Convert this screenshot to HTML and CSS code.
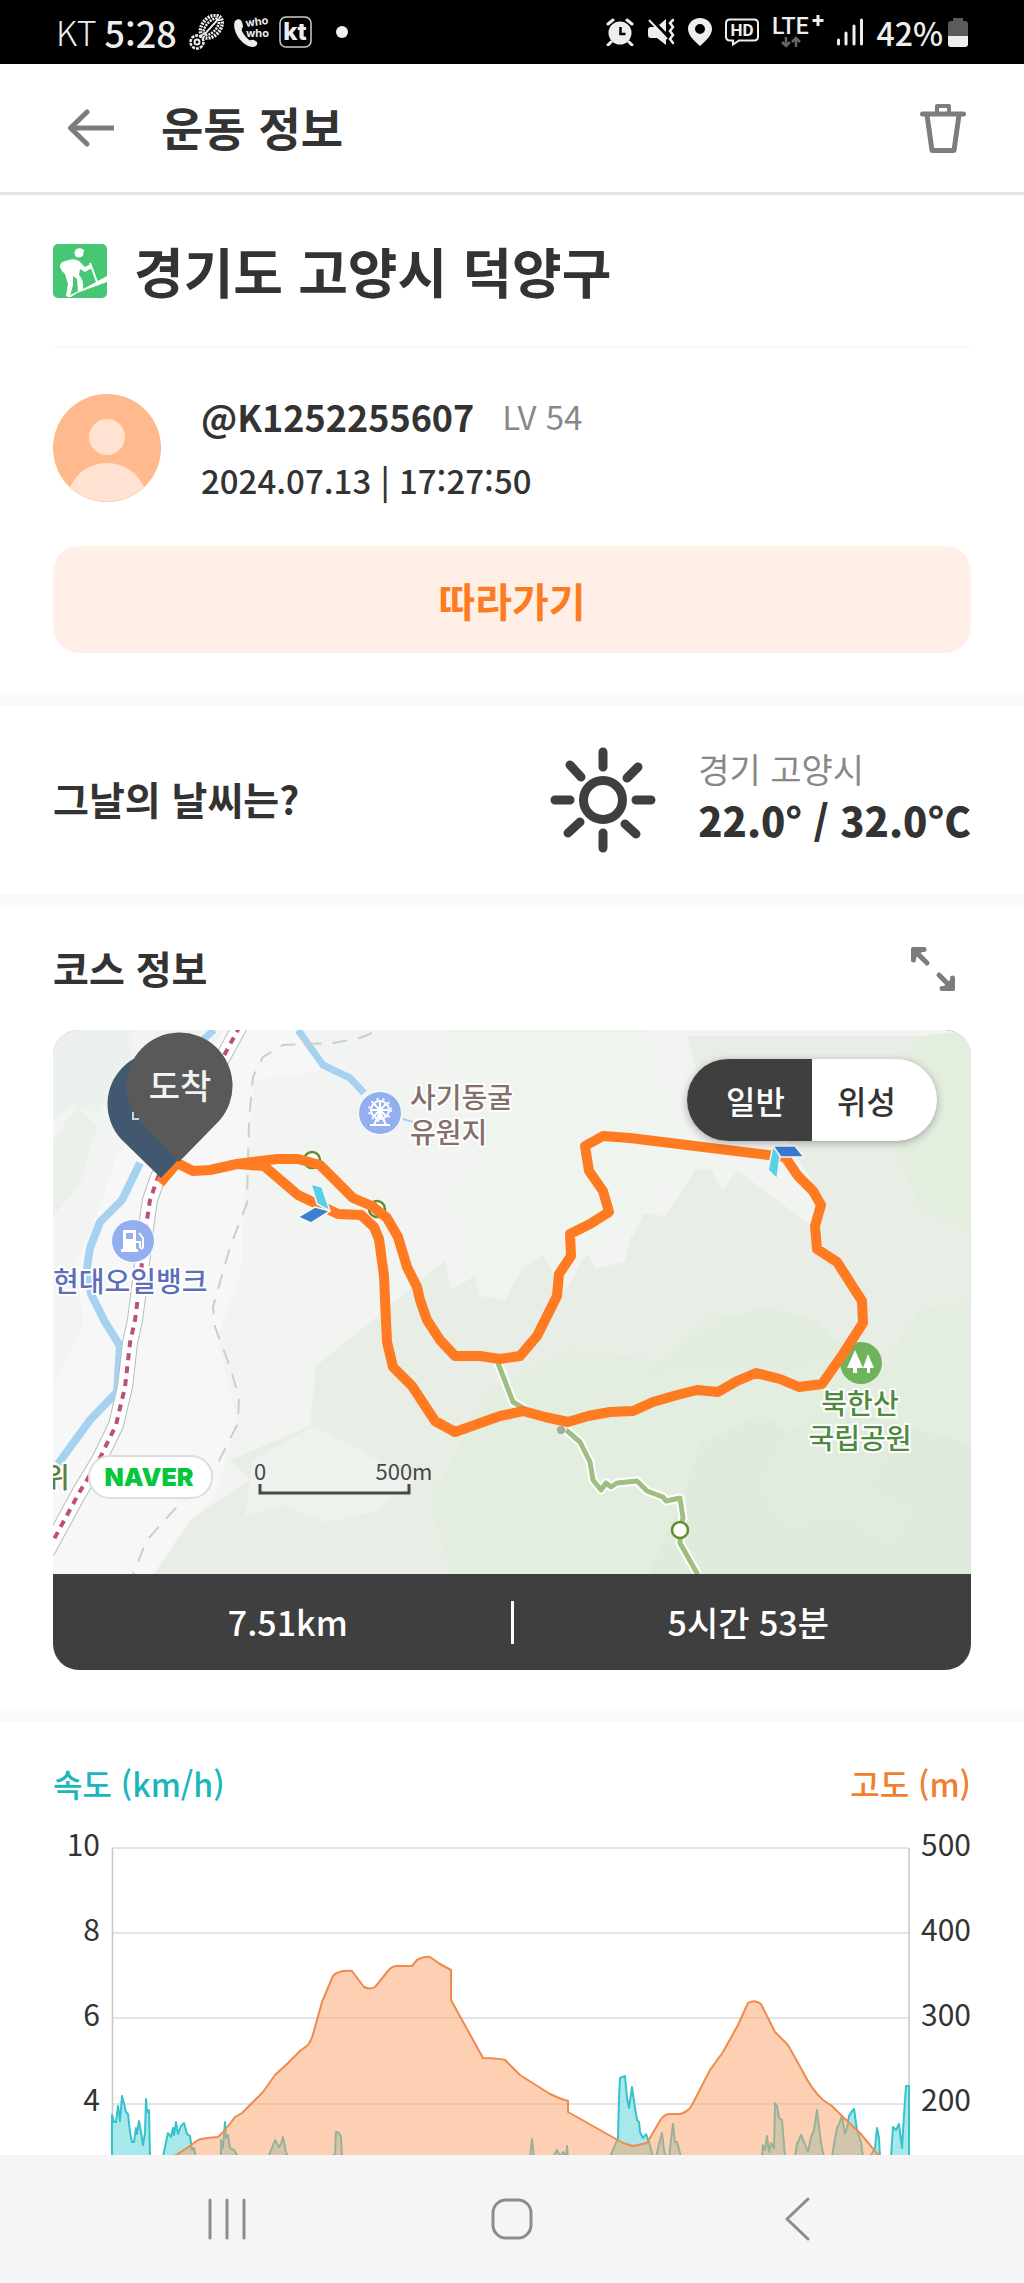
FILE: index.html
```html
<!DOCTYPE html>
<html lang="ko">
<head>
<meta charset="utf-8">
<meta name="viewport" content="width=device-width, initial-scale=1">
<title>운동 정보</title>
<link rel="stylesheet" href="styles.css">
</head>
<body>
<div class="app">
  <div class="status">
    <div class="status-group">
      <span class="carrier">KT</span>
      <span class="clock">5:28</span>
      <svg class="ic-leaf" width="36" height="36" viewBox="0 0 36 36" fill="none" stroke="#eee">
        <g transform="rotate(42 23 12)">
          <ellipse cx="23" cy="13" rx="9" ry="13" stroke-width="3.5" stroke-dasharray="2 1"/>
          <ellipse cx="23" cy="13" rx="5" ry="10" stroke-width="2.5" stroke-dasharray="2 1"/>
          <path d="M23 2v22" stroke-width="2"/>
        </g>
        <circle cx="8" cy="28" r="6.5" stroke-width="2.5" stroke-dasharray="3 1"/>
        <circle cx="8" cy="28" r="2.5" stroke-width="2"/>
      </svg>
      <svg class="ic-who" width="38" height="36" viewBox="0 0 38 36">
        <path d="M2 7c3-3 6-2 7 1l1 4c0 2-2 3-1 5 2 4 4 6 7 9 2 1 3-1 5 0l3 2c1 2-1 5-4 5C9 33-2 16 2 7z" fill="#eee"/>
        <text x="13" y="13" class="who" transform="rotate(-8 13 13)">who</text>
        <text x="13" y="23" class="who">who</text>
      </svg>
      <svg width="33" height="32" viewBox="0 0 33 32">
        <rect x="1" y="1" width="31" height="30" rx="6" fill="none" stroke="#ccc" stroke-width="1.5"/>
        <text x="16" y="24" class="kt">kt</text>
      </svg>
      <svg class="ic-dot" width="12" height="12" viewBox="0 0 12 12"><circle cx="6" cy="6" r="6" fill="#f2f2f2"/></svg>
    </div>
    <div class="status-group status-right">
      <svg width="28" height="28" viewBox="0 0 28 28">
        <circle cx="14" cy="15" r="11.5" fill="#eee"/>
        <path d="M2 6l5-4M26 6l-5-4M5 24l-3 3M23 24l3 3" stroke="#eee" stroke-width="3" stroke-linecap="round"/>
        <path d="M14.500 9v7h5" fill="none" stroke="#000" stroke-width="2.500"/>
      </svg>
      <svg width="28" height="28" viewBox="0 0 28 28">
        <path d="M1 12q0-3 3-3h5l10 12v6l-9-7H4q-3 0-3-3zM12 7l7-6v13z" fill="#eee"/>
        <path d="M2 2l18 19" stroke="#eee" stroke-width="2"/>
        <path d="M26 2l-3 3 3 4-3 4 3 4-3 4 3 4" fill="none" stroke="#eee" stroke-width="2.500" stroke-linecap="round"/>
      </svg>
      <svg width="24" height="28" viewBox="0 0 24 28"><path fill-rule="evenodd" d="M12 0C5 0 0 5 0 11c0 7 8 13 12 17 4-4 12-10 12-17C24 5 19 0 12 0zm0 6a5 5 0 1 1 0 10 5 5 0 0 1 0-10z" fill="#eee"/></svg>
      <svg width="34" height="28" viewBox="0 0 34 28">
        <path d="M5 1.500h24q4 0 4 4v13q0 4-4 4H14l-6 4v-4H5q-4 0-4-4v-13q0-4 4-4z" fill="none" stroke="#eee" stroke-width="2"/>
        <text x="17" y="18" class="hd">HD</text>
      </svg>
      <svg width="52" height="36" viewBox="0 0 52 36">
        <text x="0" y="20" class="lte">LTE</text>
        <path d="M46 1v11M40.500 6.500h11" stroke="#eee" stroke-width="3"/>
        <path d="M14 23v9m-4-4l4 4 4-4M24 33v-9m-4 4l4-4 4 4" fill="none" stroke="#666" stroke-width="2.500"/>
      </svg>
      <svg width="26" height="28" viewBox="0 0 26 28"><path d="M1.500 22v4M9 15v11M17 8v18M24.500 2v24" stroke="#eee" stroke-width="3" stroke-linecap="round"/></svg>
      <span class="percent">42%</span>
      <svg class="ic-battery" width="20" height="29" viewBox="0 0 20 29">
        <path d="M5 0h10v3h2q3 0 3 3v12H0V6q0-3 3-3h2z" fill="#5b5b5b"/>
        <path d="M0 18h20v8q0 3-3 3H3q-3 0-3-3z" fill="#eee"/>
      </svg>
    </div>
  </div>

  <header class="topbar">
    <button class="icon-button" type="button" aria-label="뒤로">
      <svg width="48" height="40" viewBox="0 0 48 40" fill="none" stroke="#7d7d7d" stroke-width="5"><path d="M47 20H4"/><path d="M20 4L3.500 20 20 36" stroke-linecap="round" stroke-linejoin="round"/></svg>
    </button>
    <h1 class="page-title">운동 정보</h1>
    <button class="icon-button" type="button" aria-label="삭제">
      <svg width="46" height="50" viewBox="0 0 46 50" fill="none" stroke="#7d7d7d" stroke-width="5" stroke-linejoin="round">
        <path d="M2.500 11h41" stroke-linecap="round"/><path d="M17 10V3h12v7" stroke-width="4"/><path d="M7 12l5 35.500h22L39 12"/>
      </svg>
    </button>
  </header>

  <main class="content">
    <section class="section profile">
      <div class="place">
        <svg width="54" height="54" viewBox="0 0 54 54">
          <rect width="54" height="54" rx="5" fill="#47c774"/>
          <path d="M13 53L32 44 54 32v6L24 49 18 53z" fill="#fff"/>
          <circle cx="26" cy="9" r="4.500" fill="#fff"/><path d="M22 7q4-5 9-1v2z" fill="#fff"/>
          <path d="M16 16q5-2 10 1l6 6 6-3 1 4-7 4-5-3-1 6q5 5 4 14l-5 3-1-13-4-3v9l-3 11h-4l2-12-3-10q-8-7-3-12z" fill="#fff"/>
          <path d="M37 19l7 19" stroke="#fff" stroke-width="2"/>
        </svg>
        <h2 class="place-name">경기도 고양시 덕양구</h2>
      </div>
      <div class="user">
        <svg width="108" height="108" viewBox="0 0 108 108">
          <circle cx="54" cy="54" r="54" fill="#ffb98c"/>
          <circle cx="54" cy="43" r="18" fill="#ffe2d1"/>
          <path d="M17 93C24 78 37 69 54 69s30 9 37 24a54 54 0 0 1-74 0z" fill="#ffe2d1"/>
        </svg>
        <div class="user-text">
          <p class="user-name"><a class="handle" href="#">@K1252255607</a><span class="level">LV 54</span></p>
          <p class="user-date">2024.07.13 | 17:27:50</p>
        </div>
      </div>
      <button class="follow" type="button">따라가기</button>
    </section>

    <section class="section weather">
      <h3 class="heading">그날의 날씨는?</h3>
      <div class="forecast">
        <svg width="106" height="106" viewBox="-53 -53 106 106" fill="none" stroke="#3f3f3f" stroke-width="9" stroke-linecap="round">
          <circle r="19.500"/>
          <path d="M0-48v15M0 33v15M-48 0h15M33 0h15M-33-35l11 12M35-33L24-22M-35 33l12-11M33 34L22 24"/>
        </svg>
        <div class="reading">
          <p class="region">경기 고양시</p>
          <p class="temp">22.0° / 32.0°C</p>
        </div>
      </div>
    </section>

    <section class="section course">
      <div class="course-head">
        <h3 class="heading">코스 정보</h3>
        <button class="icon-button" type="button" aria-label="지도 확대">
          <svg width="44" height="44" viewBox="0 0 44 44" fill="none" stroke="#7d7d7d" stroke-width="5" stroke-linecap="round" stroke-linejoin="round"><path d="M2.500 13V2.500H13M4 4l12 12M41.500 31v10.500H31M40 40L28 28"/><path d="M2.500 10V2.500H10zM41.500 34v7.500H34z"/></svg>
        </button>
      </div>
      <div class="card">
        <div class="map">
          <svg class="map-canvas" viewBox="53 1030 918 544" role="img" aria-label="코스 지도">
            <rect x="53" y="1030" width="918" height="544" fill="#f1f4f1"/>
            <path d="M53 1030h78v52l-20 8-12 24-26-8-20 14z" fill="#edf1ed"/>
            <path d="M225 1030h70l30 40 -70 10-10 90-4 100-24 70 20 80-20 70-60 84H53v-190l30-60-6-60 20-50 20-60 55-50z" fill="#f6f7f6"/>
            <path d="M53 1140l24-34 20 20-18 60-26 30z" fill="#ebf0ea"/>
            <path d="M385 1310l60-50 6 30 34-20 32 10 20-40 26 24 20-20 12 24 30-6 10-50 30 4 14-20 24-40 20 34 14-20 40 30 40 30-6-50-50-80-60-16-14-48h300v544H150l40-60 60-40-20-20 80-34 6-60z" fill="#e8eee6"/>
            <path d="M445 1030h208l6 60 32 60 50 24-50-6-34 18-24 50-20-6-30 30-20 34-20-40-22 16-16 30-26-4-22-100 34-60z" fill="#f0f4ef"/>
            <path d="M253 1460l60-34 46 24 56 30-40 32-50 10-40-16-40 10z" fill="#eef2ed"/>
            <path d="M430 1500l60-110 80-40 90 10 40-40 60-10 60 20 60 40 40-60 51-10v274H452z" fill="#e3ede0"/>
            <path d="M650 1574l30-70 20-60 60-30 60 40 40-40 111 30v130z" fill="#dfebdc"/>
            <path d="M760 1480l30-50 50-20 60 20-30 60 40 20-16 36-50-30-60 10z" fill="#e1ecdf"/>
            <path d="M871 1106l50-70 50-6v200l-50-20-20-50z" fill="#e3eedf"/>
            <path d="M704 1330l60-24 50 14 30 30-50 20-90-4-64 10z" fill="#e2ecdf"/>

            <g fill="none" stroke="#a6d2f2" stroke-linejoin="round">
              <path d="M214 1030l-40 36M298 1030l25 35 27 13 14 15" stroke-width="7"/>
              <path d="M140 1163l-18 37-22 22-10 26-3 20 4 26 14 28 15 24-3 46-27 28-32 44" stroke-width="8"/>
              <path d="M403 1119l10 3" stroke-width="2"/>
            </g>
            <g fill="none" stroke="#c9d0cb" stroke-width="2" stroke-dasharray="15 11">
              <path d="M372 1033l-12 5-27 5-50 2-20 12-10 20-4 43-2 83-17 44-17 60 2 20 15 40 9 30-1 26-21 42-34 35-36 40-14 34"/>
            </g>
            <g fill="none" stroke-linejoin="round">
              <path d="M240 1026l-82 151-8 23-3 20-9 77-3 23-5 23-5 44-9 38-17 35-20 33-32 59" stroke="#b9bcbb" stroke-width="16"/>
              <path d="M240 1026l-82 151-8 23-3 20-9 77-3 23-5 23-5 44-9 38-17 35-20 33-32 59" stroke="#fff" stroke-width="14"/>
              <path d="M240 1026l-82 151-8 23-3 20-9 77-3 23-5 23-5 44-9 38-17 35-20 33-32 59" stroke="#bd4f7b" stroke-width="4" stroke-dasharray="7 6"/>
              <path d="M498 1363l15 39 12 7M566 1430l14 12 10 20 3 18 8 10 5-7 5 4 6-4 20-2 10 10 16 6 3 4 14-3 3 20-3 12v13l18 32" stroke="#fff" stroke-width="9"/>
              <path d="M498 1363l15 39 12 7M566 1430l14 12 10 20 3 18 8 10 5-7 5 4 6-4 20-2 10 10 16 6 3 4 14-3 3 20-3 12v13l18 32" stroke="#9dc082" stroke-width="5"/>
            </g>
            <circle cx="561" cy="1430" r="4" fill="#9dac9b"/>
            <g fill="#fff" stroke="#5f8f2f" stroke-width="2.500"><circle cx="680" cy="1530" r="8"/><circle cx="312" cy="1160" r="8"/><circle cx="377" cy="1209" r="8"/></g>

            <circle cx="861" cy="1363" r="21" fill="#6fb45c"/>
            <path d="M855 1350l8 18h-6v5h-4v-5h-6zM868 1354l6 14h-4v5h-3v-5h-4z" fill="#fff"/>

            <path d="M160 1183l17-20 16 8 17-1 27-6 40-5h21l22 6 33 33 19 8 15 12 11 19 9 30 10 20 3 13 7 20 13 20 15 16h25l20 3 20-3 17-20 20-40 2-22 12-18-1-22 20-10 19-12-6-21-14-20-4-25 18-10 27 2 155 19 13 19 15 15 8 14-6 21 2 23 20 13 25 39 1 22-20 31-21 30-23 3-19-8-24-6-19 8-19 11-21-2-20 5-24 7-20 9-23 1-22 4-20 6-23-5-22-6-23 5-45 16-20-11-23-35-19-19-6-25-2-43-1-23-5-37-5-12-13-12-23-1-40-19-34-29-27-2" fill="none" stroke="#ff7a21" stroke-width="10" stroke-linejoin="round"/>
            <g stroke="#f4f7f4" stroke-width="1.500" stroke-linejoin="round">
              <path d="M298 1217l17-10 15 4-19 12z" fill="#3b7fd0"/><path d="M311 1184l11 3 8 24-13-7z" fill="#58d0e6"/>
              <path d="M773 1146h22l9 11h-24z" fill="#3b78d0"/><path d="M773 1146l7 10-3 23-9-9z" fill="#58d0e6"/>
            </g>

            <path d="M161 1178l-40-39a52 52 0 1 1 77 0z" fill="#425870"/>
            <path d="M179 1162l-37-39a53 53 0 1 1 77-2z" fill="#595959"/>
            <path d="M133 1112v7h6" fill="none" stroke="#ccd3da" stroke-width="2"/>
            <text x="180" y="1099" class="pin-label">도착</text>

            <g fill="#93aff0" stroke="#fff" stroke-width="1"><circle cx="380" cy="1113" r="21.500"/><circle cx="133" cy="1241" r="21.500"/></g>
            <g fill="none" stroke="#fff" stroke-width="2">
              <circle cx="380" cy="1110" r="9"/><path d="M371 1110h18M380 1101v18M374 1104l12 12M386 1104l-12 12M380 1112l-6 13M380 1112l6 13M370 1125h20"/>
              <circle cx="380" cy="1110" r="11" stroke-dasharray="2 4"/>
            </g>
            <path fill-rule="evenodd" d="M123 1230h13v19h2v3h-17v-3h2zm3 3v6h7v-6z" fill="#fff"/>
            <path d="M139 1233l4 5v9q-1 3-3 0v-5h-4" fill="none" stroke="#fff" stroke-width="2"/>

            <g class="poi">
              <text x="410" y="1108" class="poi-brown">사기동굴</text>
              <text x="410" y="1143" class="poi-brown">유원지</text>
              <text x="53" y="1292" class="poi-blue">현대오일뱅크</text>
              <text x="860" y="1414" class="poi-green">북한산</text>
              <text x="860" y="1449" class="poi-green">국립공원</text>
              <text x="44" y="1488" class="poi-olive">위</text>
            </g>
            <rect x="89" y="1456" width="123" height="42" rx="21" fill="#fff" stroke="#dcdedc" stroke-width="2"/>
            <text x="149" y="1486" class="naver">NAVER</text>
            <path d="M260 1484v9h149v-9" fill="none" stroke="#484848" stroke-width="3"/>
            <text x="260" y="1480" class="scale">0</text>
            <text x="404" y="1480" class="scale">500m</text>
          </svg>
          <div class="toggle">
            <button class="toggle-item is-on" type="button" aria-pressed="true">일반</button>
            <button class="toggle-item" type="button" aria-pressed="false">위성</button>
          </div>
        </div>
        <div class="summary">
          <span class="summary-item">7.51km</span>
          <span class="summary-line"></span>
          <span class="summary-item">5시간 53분</span>
        </div>
      </div>
    </section>

    <section class="stats">
      <div class="legend"><span class="speed">속도 (km/h)</span><span class="altitude">고도 (m)</span></div>
      <svg class="chart" viewBox="53 1820 918 335" role="img" aria-label="속도와 고도 그래프">
        <path d="M112 1848h797M112 1933h797M112 2018h797M112 2104h797" stroke="#e4e4e4" stroke-width="2"/>
        <path d="M112.500 1848v310M909 1848v310" stroke="#c8c8c8" stroke-width="1.500"/>
        <path d="M112 2157V2115L114 2122 116 2122 118 2106 120 2121 122 2096 124 2104 126 2112 128 2114 130 2132 132 2142 134 2142 136 2128 137 2134 139 2121 141 2132 143 2145 145 2133 146 2099 147 2112 149 2110 150 2157ZM163 2157L166 2142 168 2133 171 2137 173 2128 174 2135 176 2122 178 2134 181 2126 184 2123 187 2134 190 2136 192 2150 194 2148 196 2157ZM221 2157L221 2140 223 2148 225 2122 226 2138 228 2135 230 2148 234 2150 238 2157ZM268 2157L272 2148 275 2140 279 2147 281 2144 283 2137 286 2152 288 2157ZM331 2157L335 2154 336 2132 339 2133 341 2137 342 2157ZM530 2157L532 2139 534 2157ZM553 2157L557 2150 560 2156 563 2152 566 2156 567 2146 568 2157ZM610 2157L618 2138 619 2098 620 2078 625 2076 627 2098 629 2108 632 2087 635 2108 637 2120 639 2122 640 2132 643 2138 646 2134 649 2142 653 2157ZM656 2157L659 2144 662 2133 664 2150 666 2157ZM669 2157L671 2140 673 2124 675 2142 677 2142 681 2157ZM762 2157L763 2145 765 2150 767 2136 769 2152 771 2143 774 2148 775 2103 777 2106 779 2118 782 2120 785 2157ZM795 2157L797 2144 801 2135 804 2142 808 2152 811 2137 814 2130 817 2110 821 2143 824 2157ZM832 2157L834 2144 837 2128 839 2124 842 2116 845 2134 847 2128 849 2116 852 2111 854 2109 857 2130 861 2142 863 2157ZM870 2157L875 2148 877 2128 879 2138 880 2157ZM891 2157L893 2127 896 2130 899 2124 902 2148 904 2115 906 2086 909 2086 909 2157Z" fill="#a8e8ea" stroke="#35c3cb" stroke-width="2" stroke-linejoin="round"/>
        <path d="M173 2157L187 2148 198 2140Q204 2138 218 2137 224 2132 235 2117L242 2113 263 2092 275 2075 288 2063 300 2051 308 2045Q312 2040 315 2027L322 2002 333 1976Q338 1970 352 1971L364 1987Q370 1990 375 1987L388 1971Q392 1966 397 1966H412L417 1960Q425 1956 430 1957L440 1964 451 1970V2000L483 2058Q496 2058 505 2060L520 2075 550 2094Q558 2098 568 2101V2112L623 2143 633 2146 647 2143 661 2119Q665 2114 670 2114H680Q688 2112 692 2105L710 2070 723 2052 738 2025 748 2003Q755 1999 761 2004L775 2032 788 2045 803 2072Q812 2090 823 2100L832 2106 843 2117 860 2133 880 2157Z" fill="#fca26a" fill-opacity=".5" stroke="#ee8b4d" stroke-width="2" stroke-linejoin="round"/>
        <g class="axis"><text x="100" y="1856">10</text><text x="100" y="1941">8</text><text x="100" y="2026">6</text><text x="100" y="2111">4</text></g>
        <g class="axis"><text x="971" y="1856">500</text><text x="971" y="1941">400</text><text x="971" y="2026">300</text><text x="971" y="2111">200</text></g>
      </svg>
    </section>
  </main>

  <nav class="navbar">
    <button class="nav-button" type="button" aria-label="최근 앱"><svg width="40" height="44" viewBox="0 0 40 44" stroke="#8c8c8e" stroke-width="3" stroke-linecap="round"><path d="M3 3v38M20 3v38M37 3v38"/></svg></button>
    <button class="nav-button" type="button" aria-label="홈"><svg width="42" height="42" viewBox="0 0 42 42" fill="none" stroke="#8c8c8e" stroke-width="3"><rect x="2" y="2" width="38" height="38" rx="13"/></svg></button>
    <button class="nav-button" type="button" aria-label="뒤로 가기"><svg width="26" height="44" viewBox="0 0 26 44" fill="none" stroke="#8c8c8e" stroke-width="3" stroke-linecap="round" stroke-linejoin="round"><path d="M24 2L3 22l21 20"/></svg></button>
  </nav>
</div>
</body>
</html>
```

FILE: styles.css
```css
* { box-sizing: border-box; }

body {
  margin: 0;
  background: #fff;
  color: #333;
  font-family: "Noto Sans CJK KR", sans-serif;
}

h1, h2, h3, p { margin: 0; }

svg { display: block; flex: none; }

button {
  margin: 0;
  padding: 0;
  border: 0;
  background: none;
  color: inherit;
  font: inherit;
  cursor: pointer;
}

.app {
  display: flex;
  flex-direction: column;
  height: 100vh;
}

/* Status bar */
.status {
  display: flex;
  flex: none;
  align-items: center;
  justify-content: space-between;
  height: 64px;
  padding: 0 56px;
  background: #000;
  color: #eee;
  font-size: 34px;
  line-height: 48px;
}
.status-group { display: flex; align-items: center; gap: 8px; }
.carrier { font-weight: 300; }
.clock, .percent { font-weight: 500; }
.clock { margin-right: 4px; font-size: 36px; }
.percent { font-size: 32px; }
.ic-dot { margin-left: 16px; }
.status-right { gap: 13px; }
.ic-battery { margin-left: -8px; }
.who { font: 700 11px Inter, sans-serif; fill: #eee; }
.kt { font: 800 24px Inter, sans-serif; fill: #eee; text-anchor: middle; }
.hd { font: 700 17px Roboto, sans-serif; fill: #eee; text-anchor: middle; }
.lte { font: 500 23px Roboto, sans-serif; fill: #eee; }

/* Title bar */
.topbar {
  display: flex;
  flex: none;
  align-items: center;
  height: 131px;
  padding: 0 58px 0 67px;
  border-bottom: 3px solid #e4e4e4;
}
.page-title {
  flex: 1;
  padding: 0 0 4px 46px;
  font-size: 46px;
  font-weight: 700;
  line-height: 60px;
}

.content { flex: 1; min-height: 0; overflow: hidden; }
.section { border-bottom: 13px solid #fafafa; }
.heading { padding-bottom: 4px; font-size: 39px; font-weight: 700; line-height: 56px; }

/* Place and user */
.profile { padding: 49px 53px 40px; }
.place {
  display: flex;
  align-items: center;
  gap: 27px;
  padding-bottom: 48px;
  border-bottom: 2px solid #f8f8f8;
}
.place-name { font-size: 54px; font-weight: 700; line-height: 54px; }
.user { display: flex; align-items: center; gap: 40px; padding: 46px 0 44px; }
.user-text {
  display: grid;
  gap: 20px;
  font-size: 33px;
  font-weight: 500;
  line-height: 44px;
}
.user-name { display: flex; align-items: center; gap: 28px; }
.handle { color: inherit; font-size: 36px; font-weight: 700; text-decoration: none; }
.level { color: #888; font-weight: 400; }
.follow {
  display: block;
  width: 100%;
  height: 107px;
  border-radius: 26px;
  background: #ffefe6;
  color: #fc7c22;
  font-size: 40px;
  font-weight: 700;
}

/* Weather */
.weather {
  display: flex;
  align-items: center;
  justify-content: space-between;
  padding: 40px 53px;
}
.forecast { display: flex; align-items: center; gap: 42px; }
.reading { padding-bottom: 6px; }
.region { color: #888; font-size: 34px; line-height: 46px; }
.temp { font-size: 40px; font-weight: 900; line-height: 56px; }

/* Course */
.course { padding: 0 53px 39px; }
.course-head {
  display: flex;
  align-items: center;
  justify-content: space-between;
  height: 123px;
  padding-right: 16px;
}
.card { overflow: hidden; border-radius: 26px; background: #3f3f3f; }
.map { position: relative; }
.map-canvas { width: 100%; height: auto; }
.pin-label { font-size: 34px; font-weight: 500; fill: #f2f2f2; text-anchor: middle; }
.poi { font-size: 28px; font-weight: 500; stroke: #fff; stroke-width: 4px; paint-order: stroke; stroke-linejoin: round; }
.poi-brown { fill: #84706a; }
.poi-blue { fill: #5c6fb8; }
.poi-green { fill: #4e8a3e; text-anchor: middle; }
.poi-olive { fill: #5c8040; }
.naver { font: 900 25px Inter, sans-serif; fill: #04c73c; text-anchor: middle; }
.scale { font-size: 22px; fill: #484848; text-anchor: middle; }
.toggle {
  position: absolute;
  top: 29px;
  right: 34px;
  display: flex;
  overflow: hidden;
  border-radius: 41px;
  background: #fff;
  box-shadow: 0 2px 8px rgba(0, 0, 0, .3);
}
.toggle-item {
  width: 125px;
  height: 82px;
  padding-right: 16px;
  font-size: 32px;
  font-weight: 500;
}
.toggle-item.is-on { padding: 0 0 0 12px; background: #3f3f3f; color: #fff; }
.summary {
  display: flex;
  align-items: center;
  height: 96px;
  color: #fff;
  font-size: 34px;
  font-weight: 500;
  line-height: 44px;
}
.summary-item { flex: 1; padding-left: 12px; text-align: center; }
.summary-line { width: 3px; height: 43px; background: #fff; }

/* Speed and altitude */
.stats { padding: 28px 53px 0; }
.legend {
  display: flex;
  align-items: center;
  justify-content: space-between;
  height: 70px;
  padding-bottom: 4px;
  font-size: 32px;
  font-weight: 500;
}
.speed { color: #1ab5bd; }
.altitude { color: #f07f30; }
.chart { width: 100%; height: auto; }
.axis { font-size: 30px; font-weight: 400; fill: #333; text-anchor: end; }

/* System navigation */
.navbar {
  display: flex;
  flex: none;
  align-items: center;
  justify-content: space-around;
  height: 128px;
  padding: 0 84px;
  background: #f5f5f7;
}
.nav-button { display: flex; justify-content: center; width: 64px; }
```
